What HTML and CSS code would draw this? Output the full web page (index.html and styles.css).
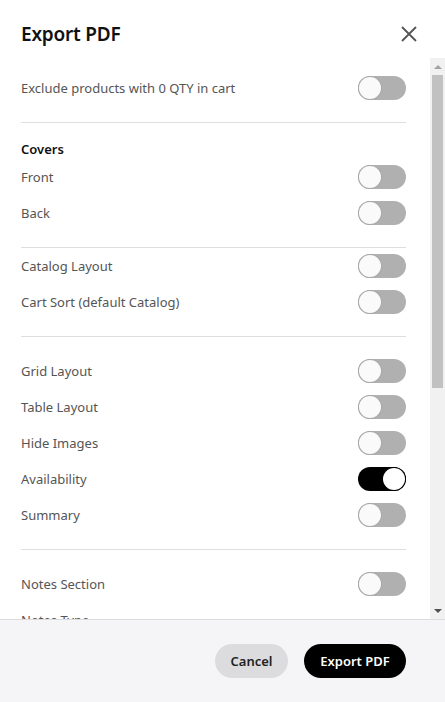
FILE: index.html
```html
<!DOCTYPE html>
<html lang="en">
<head>
<meta charset="utf-8">
<title>Export PDF</title>
<link rel="stylesheet" href="styles.css">
</head>
<body>
<div class="modal">
  <header class="modal-header">
    <h1 class="modal-title">Export PDF</h1>
    <button class="close-btn" aria-label="Close">
      <svg width="18" height="18" viewBox="0 0 18 18"><path d="M2 2 L16 16 M16 2 L2 16" stroke="#555" stroke-width="1.8" fill="none"/></svg>
    </button>
  </header>
  <div class="body-wrap">
    <div class="modal-body">
      <section class="section first">
        <div class="row"><span class="label">Exclude products with 0 QTY in cart</span><span class="toggle"></span></div>
      </section>
      <section class="section covers">
        <div class="heading">Covers</div>
        <div class="rows">
          <div class="row"><span class="label">Front</span><span class="toggle"></span></div>
          <div class="row"><span class="label">Back</span><span class="toggle"></span></div>
        </div>
      </section>
      <section class="section tight">
        <div class="rows">
          <div class="row"><span class="label">Catalog Layout</span><span class="toggle"></span></div>
          <div class="row"><span class="label">Cart Sort (default Catalog)</span><span class="toggle"></span></div>
        </div>
      </section>
      <section class="section">
        <div class="rows">
          <div class="row"><span class="label">Grid Layout</span><span class="toggle"></span></div>
          <div class="row"><span class="label">Table Layout</span><span class="toggle"></span></div>
          <div class="row"><span class="label">Hide Images</span><span class="toggle"></span></div>
          <div class="row"><span class="label">Availability</span><span class="toggle on"></span></div>
          <div class="row"><span class="label">Summary</span><span class="toggle"></span></div>
        </div>
      </section>
      <section class="section last">
        <div class="row"><span class="label">Notes Section</span><span class="toggle"></span></div>
        <div class="sub-label">Notes Type</div>
      </section>
    </div>
    <div class="scrollbar" aria-hidden="true">
      <div class="sb-btn"><span class="arrow-up"></span></div>
      <div class="sb-track"><div class="sb-thumb"></div></div>
      <div class="sb-btn"><span class="arrow-down"></span></div>
    </div>
  </div>
  <footer class="modal-footer">
    <button class="btn btn-cancel">Cancel</button>
    <button class="btn btn-primary">Export PDF</button>
  </footer>
</div>
</body>
</html>
```

FILE: styles.css
```css
* { box-sizing: border-box; }
html, body { margin: 0; padding: 0; height: 100%; }
body {
  font-family: "Noto Sans", "Open Sans", sans-serif;
  background: #fff;
  color: #222;
}
.modal {
  display: flex;
  flex-direction: column;
  height: 702px;
  width: 445px;
}
.modal-header {
  display: flex;
  align-items: center;
  justify-content: space-between;
  height: 58px;
  padding: 10px 27px 0 21px;
  flex: none;
}
.modal-title {
  margin: 0;
  font-size: 19px;
  font-weight: 600;
  color: #111;
  letter-spacing: -0.2px;
}
.close-btn {
  border: 0;
  background: none;
  padding: 0;
  width: 18px;
  height: 18px;
  display: flex;
}
.body-wrap {
  flex: 1;
  min-height: 0;
  display: flex;
}
.modal-body {
  flex: 1;
  min-width: 0;
  overflow: hidden;
  padding: 0 24px 0 21px;
}
.scrollbar {
  flex: none;
  width: 15px;
  background: #f1f1f1;
  display: flex;
  flex-direction: column;
}
.sb-btn {
  height: 17px;
  flex: none;
  display: flex;
  align-items: center;
  justify-content: center;
}
.arrow-up {
  width: 0;
  height: 0;
  border-left: 4px solid transparent;
  border-right: 4px solid transparent;
  border-bottom: 4px solid #a3a3a3;
}
.arrow-down {
  width: 0;
  height: 0;
  border-left: 4px solid transparent;
  border-right: 4px solid transparent;
  border-top: 4px solid #505050;
}
.sb-track {
  flex: 1;
  padding: 0 2px;
}
.sb-thumb {
  height: 313px;
  background: #c1c1c1;
}
.section {
  border-bottom: 1px solid #dedede;
  padding: 22px 0 22px;
}
.section.first { padding-top: 18px; }
.section.covers { padding-top: 16px; }
.section.tight { padding-top: 6px; }
.section.last { border-bottom: 0; padding-bottom: 0; }
.heading {
  font-size: 13px;
  font-weight: 600;
  color: #111;
  line-height: 20px;
  margin-bottom: 6px;
}
.rows {
  display: flex;
  flex-direction: column;
  gap: 12px;
}
.row {
  display: flex;
  align-items: center;
  justify-content: space-between;
  height: 24px;
}
.label {
  font-size: 13px;
  color: #555;
}
.sub-label {
  font-size: 13px;
  color: #555;
  margin-top: 14px;
  line-height: 20px;
}
.toggle {
  position: relative;
  width: 48px;
  height: 24px;
  border-radius: 12px;
  background: #b0b0b0;
  flex: none;
}
.toggle::after {
  content: "";
  position: absolute;
  top: 1px;
  left: 1px;
  width: 22px;
  height: 22px;
  border-radius: 50%;
  background: #fafafa;
  box-shadow: 0 0 0 1px #a8a8a8;
}
.toggle.on { background: #000; }
.toggle.on::after {
  left: 25px;
  background: #fff;
  box-shadow: 0 0 0 1px #000;
}
.modal-footer {
  flex: none;
  height: 83px;
  background: #f5f5f7;
  border-top: 1px solid #dcdcdc;
  display: flex;
  align-items: center;
  justify-content: flex-end;
  gap: 16px;
  padding: 0 39px 0 0;
}
.btn {
  font-family: inherit;
  height: 34px;
  border: 0;
  border-radius: 17px;
  font-size: 13px;
  font-weight: 600;
  padding: 0;
  white-space: nowrap;
}
.btn-cancel {
  background: #dcdcdf;
  color: #222;
  width: 73px;
}
.btn-primary {
  background: #000;
  color: #fff;
  width: 102px;
}
```
